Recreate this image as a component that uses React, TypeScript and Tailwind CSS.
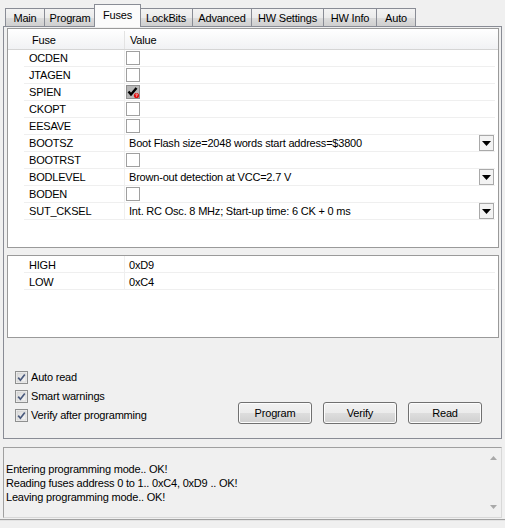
import React from "react";

const tabs = [
  { label: "Main", w: "w-[40px]", m: "" },
  { label: "Program", w: "w-[52px]", m: "-ml-px" },
  { label: "Fuses", w: "w-[47px]", m: "-ml-[2px] -mr-[2px]", sel: true },
  { label: "LockBits", w: "w-[54px]", m: "" },
  { label: "Advanced", w: "w-[60px]", m: "-ml-px" },
  { label: "HW Settings", w: "w-[73px]", m: "-ml-px" },
  { label: "HW Info", w: "w-[54px]", m: "-ml-px" },
  { label: "Auto", w: "w-[40px]", m: "-ml-px" },
];

type Fuse = { name: string; kind: "cb" | "spien" | "dd"; text?: string };

const fuses: Fuse[] = [
  { name: "OCDEN", kind: "cb" },
  { name: "JTAGEN", kind: "cb" },
  { name: "SPIEN", kind: "spien" },
  { name: "CKOPT", kind: "cb" },
  { name: "EESAVE", kind: "cb" },
  { name: "BOOTSZ", kind: "dd", text: "Boot Flash size=2048 words start address=$3800" },
  { name: "BOOTRST", kind: "cb" },
  { name: "BODLEVEL", kind: "dd", text: "Brown-out detection at VCC=2.7 V" },
  { name: "BODEN", kind: "cb" },
  { name: "SUT_CKSEL", kind: "dd", text: "Int. RC Osc. 8 MHz; Start-up time: 6 CK + 0 ms" },
];

function GridCheck() {
  return <div className="ml-px h-[14px] w-[14px] border border-[#a0a0a0] bg-white" />;
}

function SpienCheck() {
  return (
    <svg width="14" height="14" viewBox="0 0 14 14" className="ml-px">
      <rect x="0.5" y="0.5" width="13" height="13" fill="#b8b8b8" stroke="#8f8f8f" />
      <path d="M2.5 6.5 L5 9.5 L10.5 3" fill="none" stroke="#000" strokeWidth="2.4" />
      <circle cx="10.5" cy="10.5" r="2.6" fill="#e01010" />
      <path d="M9.6 9.6 Q10.5 8.6 11.3 9.6 Q11.3 10.4 10.5 10.8 L10.5 11.4" fill="none" stroke="#fff" strokeWidth="0.8" />
    </svg>
  );
}

function DropArrow() {
  return (
    <div className="mr-px flex h-[16px] w-[15px] items-center justify-center border border-[#a9a9a9] bg-[#f3f3f3]">
      <svg width="9" height="5" viewBox="0 0 9 5">
        <path d="M0 0 H9 L4.5 5 Z" fill="#000" />
      </svg>
    </div>
  );
}

function WinCheck() {
  return (
    <svg width="13" height="13" viewBox="0 0 13 13">
      <defs>
        <linearGradient id="cbg" x1="0" y1="0" x2="1" y2="1">
          <stop offset="0" stopColor="#d9d9d9" />
          <stop offset="1" stopColor="#f6f6f6" />
        </linearGradient>
      </defs>
      <rect x="0.5" y="0.5" width="12" height="12" fill="#f4f4f4" stroke="#8e8f8f" />
      <rect x="2" y="2" width="9" height="9" fill="url(#cbg)" stroke="#c9c9c9" strokeWidth="0.6" />
      <path d="M3.2 6.6 L5.4 9.2 L9.8 3.4" fill="none" stroke="#4a5a7d" strokeWidth="1.7" />
    </svg>
  );
}

function Button({ label }: { label: string }) {
  return (
    <div className="flex h-[22px] w-[74px] items-center justify-center rounded-[3px] border border-[#707070] bg-[linear-gradient(to_bottom,#f2f2f2_0%,#ebebeb_50%,#dddddd_51%,#cfcfcf_100%)] shadow-[inset_0_0_0_1px_#fcfcfc]">
      {label}
    </div>
  );
}

export default function App() {
  return (
    <div className="relative h-[528px] w-[505px] overflow-hidden bg-[#f0f0f0] font-['Liberation_Sans',Arial,sans-serif] text-[11px] leading-none tracking-[-0.2px] text-black">
      {/* tab strip */}
      <div className="relative z-10 flex h-[26px] items-end pl-[5px]">
        {tabs.map((t) =>
          t.sel ? (
            <div
              key={t.label}
              className={`${t.w} ${t.m} relative z-10 mb-[-1px] flex h-[23px] items-start justify-center border border-b-0 border-[#898c95] bg-[#fbfbfb] pt-[5px]`}
            >
              {t.label}
            </div>
          ) : (
            <div
              key={t.label}
              className={`${t.w} ${t.m} flex h-[18px] items-center justify-center border border-b-0 border-[#898c95] bg-[linear-gradient(to_bottom,#f3f3f3_0%,#ebebeb_50%,#dddddd_51%,#cfcfcf_100%)] pt-px`}
            >
              {t.label}
            </div>
          )
        )}
      </div>

      {/* tab panel */}
      <div className="ml-[3px] flex h-[413px] w-[499px] flex-col border border-[#898c95] bg-[#f0f0f0] pl-[3px] pt-px">
        {/* fuse grid */}
        <div className="flex h-[220px] w-[492px] flex-col border border-[#9a9a9a] bg-white">
          <div className="flex h-[21px] shrink-0 items-center border-b border-[#d5d5d5] bg-[linear-gradient(to_bottom,#ffffff,#f1f2f4)] pt-[2px]">
            <div className="w-[16px]" />
            <div className="w-[100px] pl-[8px]">Fuse</div>
            <div className="flex h-full flex-1 items-center border-l border-[#e3e3e3] pl-[5px]">Value</div>
          </div>
          <div className="flex flex-col pr-[3px]">
            {fuses.map((f) => (
              <div key={f.name} className="flex h-[17px]">
                <div className="w-[16px] shrink-0" />
                <div className="flex w-[100px] shrink-0 items-center border-b border-[#efefef] pl-[5px] pt-px">{f.name}</div>
                <div className="flex flex-1 items-center border-b border-l border-[#efefef]">
                  {f.kind === "cb" && <GridCheck />}
                  {f.kind === "spien" && <SpienCheck />}
                  {f.kind === "dd" && (
                    <div className="flex flex-1 items-center justify-between pl-[4px]">
                      <span className="pt-px">{f.text}</span>
                      <DropArrow />
                    </div>
                  )}
                </div>
              </div>
            ))}
          </div>
        </div>

        {/* hex grid */}
        <div className="mt-[7px] flex h-[83px] w-[492px] flex-col border border-[#9a9a9a] bg-white pr-[3px]">
          {[
            ["HIGH", "0xD9"],
            ["LOW", "0xC4"],
          ].map(([a, b]) => (
            <div key={a} className="flex h-[17px]">
              <div className="w-[16px] shrink-0" />
              <div className="flex w-[100px] shrink-0 items-center border-b border-[#efefef] pl-[5px] pt-[2px]">{a}</div>
              <div className="flex flex-1 items-center border-b border-l border-[#efefef] pl-[4px] pt-[2px]">{b}</div>
            </div>
          ))}
        </div>

        {/* options + buttons */}
        <div className="mt-[29px] flex w-[492px] items-start justify-between">
          <div className="flex flex-col pl-[8px]">
            {["Auto read", "Smart warnings", "Verify after programming"].map((l, i) => (
              <div
                key={l}
                className={`flex items-center gap-[3px] ${i === 0 ? "h-[20px]" : i === 1 ? "h-[19px]" : "h-[18px]"}`}
              >
                <WinCheck />
                <span>{l}</span>
              </div>
            ))}
          </div>
          <div className="mr-[17px] mt-[35px] flex gap-[11px]">
            <Button label="Program" />
            <Button label="Verify" />
            <Button label="Read" />
          </div>
        </div>
      </div>

      {/* log */}
      <div className="ml-[3px] mt-[8px] flex h-[71px] w-[499px] border border-[#a0a0a0] border-b-[#d8d8d8] border-r-[#d8d8d8] bg-[#f0f0f0]">
        <div className="flex flex-1 flex-col pl-[2px] pt-[14px] leading-[14px]">
          <div>Entering programming mode.. OK!</div>
          <div>Reading fuses address 0 to 1.. 0xC4, 0xD9 .. OK!</div>
          <div>Leaving programming mode.. OK!</div>
        </div>
        <div className="flex w-[16px] flex-col items-center justify-between py-[8px]">
          <svg width="7" height="4" viewBox="0 0 7 4">
            <path d="M0 4 L3.5 0 L7 4 Z" fill="#a9a9a9" />
          </svg>
          <svg width="7" height="4" viewBox="0 0 7 4">
            <path d="M0 0 L3.5 4 L7 0 Z" fill="#a9a9a9" />
          </svg>
        </div>
      </div>
      <div className="mt-px h-[2px] w-full border-t border-[#a0a0a0] bg-[#e3e3e3]" />
    </div>
  );
}
